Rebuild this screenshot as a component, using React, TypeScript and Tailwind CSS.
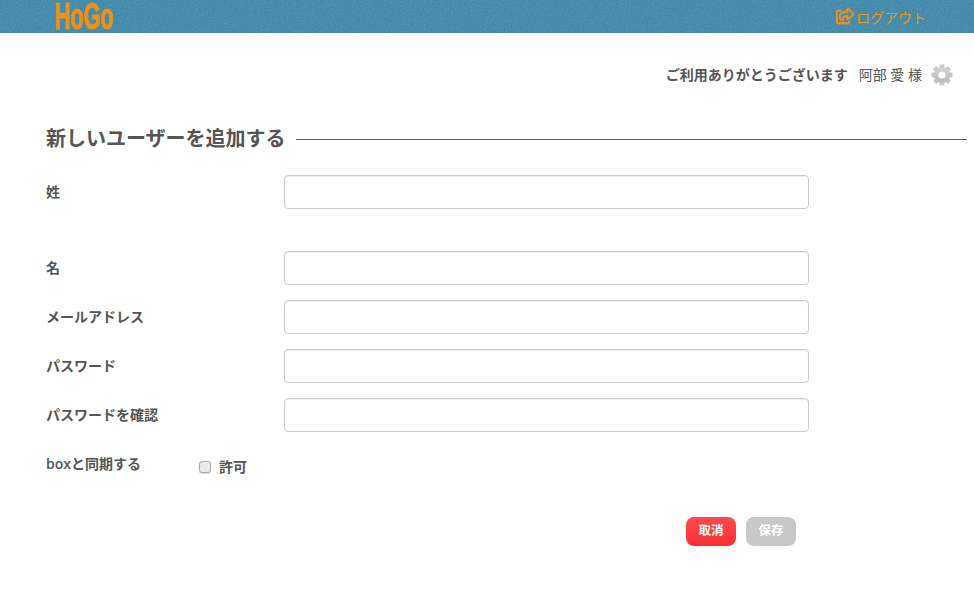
import { FaRegShareSquare } from 'react-icons/fa';

const FONT = "font-['Open_Sans','Noto_Sans_CJK_JP',sans-serif]";
const TEETH = [0, 45, 90, 135, 180, 225, 270, 315];

function HeaderTexture() {
  return (
    <svg className="absolute inset-0 h-full w-full" aria-hidden="true">
      <filter id="felt" x="0" y="0" width="100%" height="100%">
        <feTurbulence type="fractalNoise" baseFrequency="0.7" numOctaves="3" seed="4" />
        <feColorMatrix
          type="matrix"
          values="0 0 0 0 0.08  0 0 0 0 0.3  0 0 0 0 0.44  1.8 0 0 0 -0.5"
        />
      </filter>
      <rect width="100%" height="100%" filter="url(#felt)" />
    </svg>
  );
}

function GearIcon() {
  return (
    <svg width="22" height="22" viewBox="0 0 22 22">
      <defs>
        <linearGradient id="gear" x1="0" y1="0" x2="0" y2="1">
          <stop offset="0" stopColor="#d2d2d2" />
          <stop offset="1" stopColor="#bdbdbd" />
        </linearGradient>
      </defs>
      <g fill="#c8c8c8">
        {TEETH.map((deg) => (
          <rect key={deg} x="8.6" y="0.5" width="4.8" height="5" rx="0.8" transform={`rotate(${deg} 11 11)`} />
        ))}
      </g>
      <circle cx="11" cy="11" r="5.8" fill="none" stroke="url(#gear)" strokeWidth="4.4" />
    </svg>
  );
}

function Row({ label, className = '' }: { label: string; className?: string }) {
  return (
    <div className={`flex items-center ${className}`}>
      <label className="w-[238px] pb-[2px] text-[14px] font-semibold text-[#555]">{label}</label>
      <input
        type="text"
        className="h-[34px] w-[525px] rounded-[4px] border border-[#ccc] bg-white shadow-[inset_0_1px_1px_rgba(0,0,0,0.075)]"
      />
    </div>
  );
}

export default function App() {
  return (
    <div className={`h-[591px] w-[974px] overflow-hidden bg-white ${FONT}`}>
      <header className="relative h-[33px] bg-[#3f86aa]">
        <HeaderTexture />
        <div className="relative flex h-full items-start justify-between pl-[55px] pr-[48px]">
          <span className="-mt-[4px] origin-left scale-x-[0.6] font-['Liberation_Sans',sans-serif] text-[36px] leading-[41px] font-bold text-[#ee9116] [-webkit-text-stroke:1.2px_#ee9116]">
            HoGo
          </span>
          <a className="mt-[7px] flex items-center gap-[2px] text-[14px] leading-[20px] text-[#ee9116]">
            <FaRegShareSquare size={18} stroke="currentColor" strokeWidth={24} className="mb-[4px]" />
            ログアウト
          </a>
        </div>
      </header>

      <div className="mt-[26px] flex h-[31px] items-center justify-end pr-[21px] text-[#555]">
        <span className="text-[14px] font-semibold">ご利用ありがとうございます</span>
        <span className="ml-[11px] text-[14px] font-normal">阿部 愛 様</span>
        <span className="ml-[9px]">
          <GearIcon />
        </span>
      </div>

      <main className="pl-[46px] pr-[7px] pt-[35px]">
        <div className="flex items-center">
          <h2 className="text-[20px] leading-[28px] font-semibold text-[#555]">新しいユーザーを追加する</h2>
          <div className="ml-[10px] h-px flex-1 bg-[#3a6a80]" />
        </div>

        <Row label="姓" className="mt-[22px]" />
        <Row label="名" className="mt-[42px]" />
        <Row label="メールアドレス" className="mt-[15px]" />
        <Row label="パスワード" className="mt-[15px]" />
        <Row label="パスワードを確認" className="mt-[15px]" />

        <div className="mt-[21px] flex items-start">
          <span className="w-[153px] text-[14px] leading-[22px] font-semibold text-[#555]">boxと同期する</span>
          <label className="mt-[3px] flex items-center text-[14px] leading-[22px] font-semibold text-[#555]">
            <span className="h-[12px] w-[12px] rounded-[3px] border border-[#aaa] bg-[#e9e9e9] shadow-[0_1px_1px_rgba(0,0,0,0.15)]" />
            <span className="ml-[8px]">許可</span>
          </label>
        </div>

        <div className="mt-[39px] flex gap-[10px] pl-[640px]">
          <button className="h-[29px] w-[50px] rounded-[8px] bg-[linear-gradient(#fb4a4e,#fb2f34)] text-[12.5px] font-bold text-white">取消</button>
          <button className="h-[29px] w-[50px] rounded-[8px] bg-[#c8c8c8] text-[12.5px] font-bold text-white">保存</button>
        </div>
      </main>
    </div>
  );
}
